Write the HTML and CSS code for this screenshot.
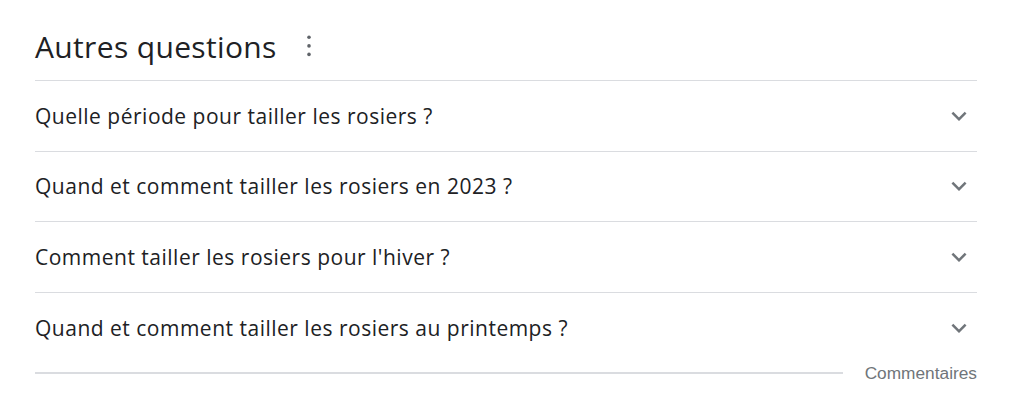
FILE: index.html
```html
<!DOCTYPE html>
<html>
<head>
	<meta charset="utf-8">
	<title>Autres questions</title>
	<link rel="stylesheet" href="styles.css">
</head>
<body>
	<div class="block">
		<div class="head">
			<h2>Autres questions</h2>
			<span class="more">
				<svg width="6" height="24" viewBox="0 0 6 24"><circle cx="3" cy="3.2" r="1.8"/><circle cx="3" cy="11.9" r="1.8"/><circle cx="3" cy="20.4" r="1.8"/></svg>
			</span>
		</div>

		<ul class="questions">
			<li>
				<span class="q">Quelle période pour tailler les rosiers ?</span>
				<svg class="chev" width="30" height="30" viewBox="0 0 24 24"><path d="M7.41 8.59L12 13.17l4.59-4.58L18 10l-6 6-6-6 1.41-1.41z"/></svg>
			</li>
			<li>
				<span class="q">Quand et comment tailler les rosiers en 2023 ?</span>
				<svg class="chev" width="30" height="30" viewBox="0 0 24 24"><path d="M7.41 8.59L12 13.17l4.59-4.58L18 10l-6 6-6-6 1.41-1.41z"/></svg>
			</li>
			<li>
				<span class="q">Comment tailler les rosiers pour l'hiver ?</span>
				<svg class="chev" width="30" height="30" viewBox="0 0 24 24"><path d="M7.41 8.59L12 13.17l4.59-4.58L18 10l-6 6-6-6 1.41-1.41z"/></svg>
			</li>
			<li>
				<span class="q">Quand et comment tailler les rosiers au printemps ?</span>
				<svg class="chev" width="30" height="30" viewBox="0 0 24 24"><path d="M7.41 8.59L12 13.17l4.59-4.58L18 10l-6 6-6-6 1.41-1.41z"/></svg>
			</li>
		</ul>

		<div class="foot">
			<div class="line"></div>
			<span class="comments">Commentaires</span>
		</div>
	</div>
</body>
</html>
```
FILE: styles.css
```css
* {
	margin: 0;
	padding: 0;
}

html, body {
	background: #fff;
}

body {
	font-family: "Open Sans", Roboto, sans-serif;
	color: #202124;
}

.block {
	width: 942px;
	margin-left: 35px;
}

/* Titre */

.head {
	height: 81px;
	display: flex;
	align-items: center;
	box-sizing: border-box;
	padding-top: 13px;
	border-bottom: 1px solid #dadce0;
}

.head h2 {
	font-size: 30px;
	font-weight: 400;
	line-height: 36px;
	letter-spacing: 0.35px;
}

.more {
	display: flex;
	margin-left: 29px;
	margin-top: -2px;
	fill: #5f6368;
}

/* Questions */

.questions {
	list-style: none;
}

.questions li {
	height: 70.5px;
	box-sizing: border-box;
	display: flex;
	align-items: center;
	justify-content: space-between;
	border-bottom: 1px solid #dadce0;
}

.questions li:last-child {
	border-bottom: none;
}

.q {
	font-size: 21px;
	line-height: 28px;
	letter-spacing: 0.5px;
}

.chev {
	fill: #70757a;
	margin-right: 3px;
}

/* Commentaires */

.foot {
	display: flex;
	align-items: center;
	margin-top: 1px;
}

.line {
	flex: 1;
	height: 2px;
	background: #dadce0;
}

.comments {
	margin-left: 22px;
	font-family: "Liberation Sans", Arial, sans-serif;
	font-size: 17.3px;
	line-height: 18px;
	color: #70757a;
}
```
